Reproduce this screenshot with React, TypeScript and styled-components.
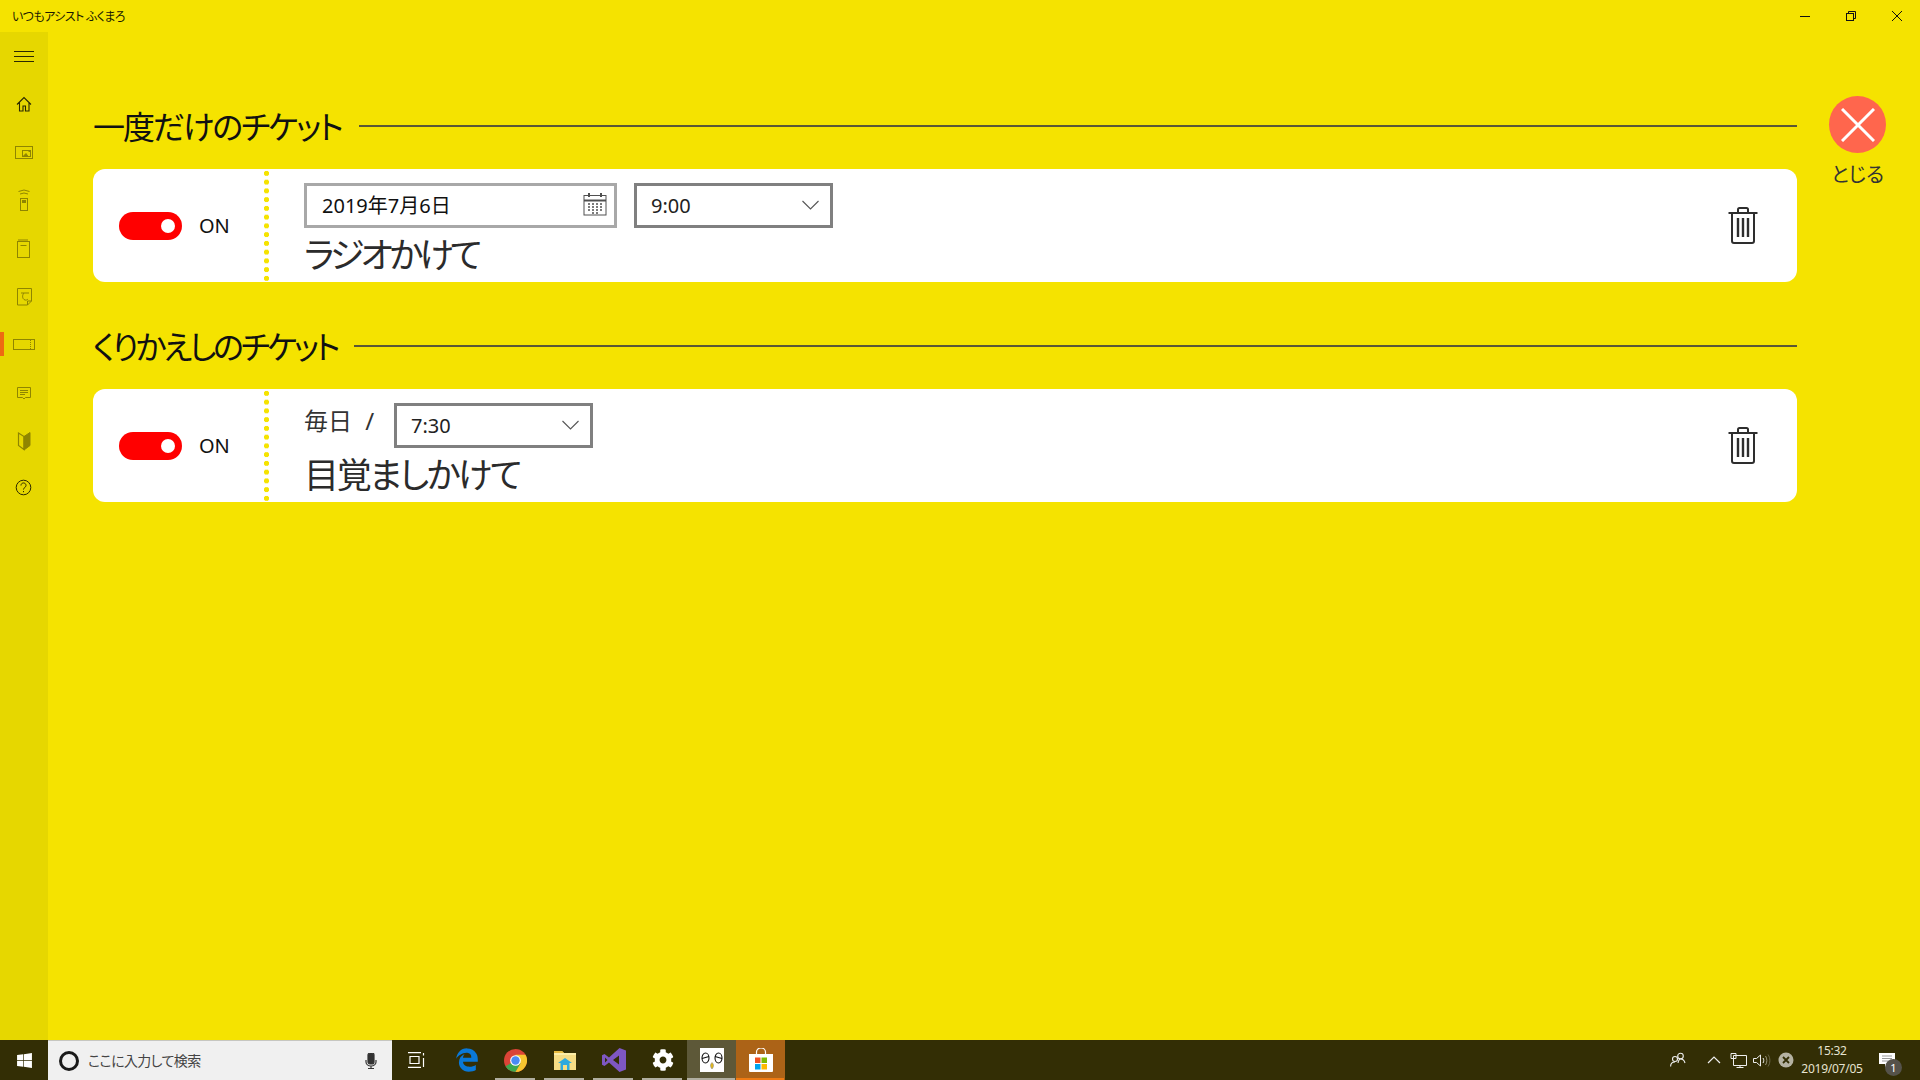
import { ReactNode } from "react";
import styled, { createGlobalStyle } from "styled-components";
import { FaCog, FaEdgeLegacy, FaWindows } from "react-icons/fa";

const GlobalStyle = createGlobalStyle`
  html, body {
    margin: 0;
    padding: 0;
    width: 1920px;
    height: 1080px;
    overflow: hidden;
    font-family: "Noto Sans", "Noto Sans CJK JP", sans-serif;
  }
  * {
    box-sizing: border-box;
  }
`;

const Page = styled.div`
  display: flex;
  flex-direction: column;
  width: 1920px;
  height: 1080px;
  background: #f5e300;
`;

const TitleBar = styled.div`
  display: flex;
  align-items: center;
  justify-content: space-between;
  height: 32px;
  padding-left: 12px;
`;

const AppName = styled.span`
  font-size: 12px;
  letter-spacing: -0.6px;
  color: #1a1a00;
  font-feature-settings: "palt";
`;

const WindowControls = styled.div`
  display: flex;
`;

const WindowButton = styled.div`
  display: flex;
  align-items: center;
  justify-content: center;
  width: 46px;
  height: 32px;
`;

const Body = styled.div`
  display: flex;
  flex: 1;
  min-height: 0;
`;

const Sidebar = styled.nav`
  display: flex;
  flex-direction: column;
  width: 48px;
  background: #e6d700;
`;

const NavItem = styled.div<{ $active?: boolean }>`
  position: relative;
  width: 48px;
  height: 48px;
  flex-shrink: 0;

  &::before {
    content: "";
    display: ${(p) => (p.$active ? "block" : "none")};
    position: absolute;
    left: 0;
    top: 12px;
    width: 4px;
    height: 24px;
    background: #ee6a12;
  }

  svg {
    display: block;
  }
`;

const Content = styled.main`
  display: flex;
  align-items: flex-start;
  flex: 1;
  padding: 64px 0 0 45px;
`;

const Sections = styled.div`
  display: flex;
  flex-direction: column;
  width: 1704px;
  padding-top: 5px;
`;

const SectionHeading = styled.div<{ $spaced?: boolean }>`
  display: flex;
  align-items: center;
  height: 50px;
  margin-top: ${(p) => (p.$spaced ? "39px" : "0")};
  margin-bottom: 18px;
`;

const HeadingText = styled.h2<{ $tracking: number }>`
  margin: 0;
  padding-top: 2px;
  font-size: 32px;
  font-weight: 400;
  line-height: 50px;
  letter-spacing: ${(p) => p.$tracking}px;
  color: #111;
  white-space: nowrap;
  font-feature-settings: "palt";
`;

const HeadingRule = styled.div`
  flex: 1;
  height: 2px;
  margin-left: 17px;
  background: #5a5636;
`;

const Card = styled.section`
  display: flex;
  align-items: stretch;
  height: 113px;
  border-radius: 12px;
  background: #fff;
`;

const ToggleArea = styled.div`
  display: flex;
  align-items: center;
  gap: 17px;
  width: 171px;
  padding-left: 26px;
`;

const Toggle = styled.div`
  display: flex;
  align-items: center;
  justify-content: flex-end;
  width: 63px;
  height: 28px;
  padding-right: 7px;
  border-radius: 14px;
  background: #ff0000;
`;

const ToggleKnob = styled.div`
  width: 14px;
  height: 14px;
  border-radius: 50%;
  background: #fff;
`;

const ToggleLabel = styled.span`
  font-size: 20px;
  color: #111;
`;

const Perforation = styled.div`
  width: 5px;
  background: radial-gradient(circle at center, #f5e300 2.4px, transparent 2.9px) 0 0 / 5px 8.75px repeat-y;
`;

const TicketBody = styled.div`
  display: flex;
  flex: 1;
  flex-direction: column;
  padding: 14px 0 0 35px;
`;

const FieldRow = styled.div`
  display: flex;
  align-items: center;
  height: 45px;
`;

const DateField = styled.div`
  display: flex;
  align-items: center;
  justify-content: space-between;
  width: 313px;
  height: 45px;
  margin-right: 17px;
  padding: 0 7px 2px 15px;
  border: 3px solid #a8a8a8;
  font-size: 20px;
  color: #111;
`;

const SelectField = styled.div`
  display: flex;
  align-items: center;
  justify-content: space-between;
  width: 199px;
  height: 45px;
  padding: 0 11px 1px 14px;
  border: 3px solid #808080;
  font-size: 20px;
  color: #222;
`;

const RepeatLabel = styled.span`
  width: 90px;
  margin-top: -12px;
  font-size: 24px;
  word-spacing: 7px;
  color: #333;
`;

const TicketTitle = styled.div<{ $tracking: number }>`
  margin-top: 2px;
  font-size: 35px;
  line-height: 50px;
  letter-spacing: ${(p) => p.$tracking}px;
  color: #2b2b2b;
  font-feature-settings: "palt";
`;

const TrashButton = styled.div`
  display: flex;
  align-items: center;
  justify-content: center;
  width: 30px;
  margin-right: 39px;
`;

const CloseColumn = styled.div`
  display: flex;
  flex-direction: column;
  align-items: center;
  width: 57px;
  margin-left: 32px;
`;

const CloseCircle = styled.div`
  display: flex;
  align-items: center;
  justify-content: center;
  width: 57px;
  height: 57px;
  border-radius: 50%;
  background: #ff664d;
`;

const CloseLabel = styled.span`
  margin-top: 7px;
  font-size: 20px;
  line-height: 30px;
  color: #333;
  white-space: nowrap;
  font-feature-settings: "palt";
`;

const Taskbar = styled.footer`
  display: flex;
  align-items: stretch;
  height: 40px;
  background: #332e05;
`;

const StartButton = styled.div`
  display: flex;
  align-items: center;
  justify-content: center;
  width: 48px;
  color: #fff;
  font-size: 17px;
`;

const SearchBox = styled.div`
  display: flex;
  align-items: center;
  width: 344px;
  padding: 0 15px 0 11px;
  border-top: 1px solid #c6c6c0;
  background: #f0f0f0;
`;

const SearchPrompt = styled.span`
  flex: 1;
  margin: -2px 0 0 9px;
  font-size: 14px;
  letter-spacing: -0.6px;
  color: #444;
  font-feature-settings: "palt";
`;

const TaskView = styled.div`
  display: flex;
  align-items: center;
  justify-content: center;
  width: 50px;
  padding-right: 1px;
`;

const TaskButton = styled.div<{ $bg?: string; $line?: string; $wide?: boolean; $color?: string; $size?: number }>`
  position: relative;
  display: flex;
  align-items: center;
  justify-content: center;
  width: 49px;
  color: ${(p) => p.$color ?? "#fff"};
  font-size: ${(p) => p.$size ?? 22}px;
  background: ${(p) => p.$bg ?? "transparent"};

  &::after {
    content: "";
    position: absolute;
    bottom: 0;
    left: ${(p) => (p.$wide ? "0" : "4px")};
    right: ${(p) => (p.$wide ? "1px" : "5px")};
    height: 2px;
    background: ${(p) => p.$line ?? "transparent"};
  }
`;

const Tray = styled.div`
  display: flex;
  align-items: center;
  margin-left: auto;
  padding-right: 13px;
`;

const TrayIcon = styled.div<{ $gap?: number }>`
  display: flex;
  align-items: center;
  justify-content: center;
  width: 24px;
  height: 40px;
  margin-right: ${(p) => p.$gap ?? 0}px;
`;

const Clock = styled.div`
  display: flex;
  flex-direction: column;
  align-items: center;
  width: 68px;
  font-size: 12px;
  line-height: 18px;
  letter-spacing: -0.25px;
  color: #e6e3d0;
`;

const NotifyButton = styled.div`
  position: relative;
  display: flex;
  align-items: center;
  justify-content: center;
  width: 40px;
  height: 40px;
  margin-left: 1px;
`;

const NotifyBadge = styled.span`
  position: absolute;
  right: 5px;
  bottom: 4px;
  width: 17px;
  height: 17px;
  border-radius: 50%;
  background: #55524a;
  color: #fff;
  font-size: 11px;
  line-height: 17px;
  text-align: center;
`;

function NavIcon({ children }: { children: ReactNode }) {
  return (
    <svg width="48" height="48" viewBox="0 0 48 48" fill="none" stroke="#8f8500" strokeWidth="1">
      {children}
    </svg>
  );
}

const navIcons: { key: string; active?: boolean; icon: ReactNode }[] = [
  {
    key: "menu",
    icon: <path d="M14 19.5h20M14 24.5h20M14 29.5h20" stroke="#2b2800" />,
  },
  {
    key: "home",
    icon: <path d="M17 24.5 24 17.5l7 7M19.5 22.5v8.5h3.5v-5h2.5v5H29v-8.5" stroke="#2b2800" strokeWidth="1.1" />,
  },
  {
    key: "picture",
    icon: (
      <>
        <rect x="15.5" y="18.5" width="17" height="12" />
        <rect x="22.5" y="22.5" width="8" height="6" />
        <path d="M23 28.5l3-3 2 3z" fill="#8f8500" />
        <path d="M28.5 23.5h2" />
      </>
    ),
  },
  {
    key: "remote",
    icon: (
      <>
        <rect x="20.5" y="22.5" width="7" height="12" />
        <rect x="22" y="24" width="4" height="3" fill="#8f8500" stroke="none" />
        <path d="M18.5 15.5q5.5-3 11 0M20 18q4-2 8 0" />
      </>
    ),
  },
  {
    key: "note",
    icon: (
      <>
        <rect x="17.5" y="17.5" width="12" height="16" />
        <path d="M19 15v2.5M21 15v2.5M23 15v2.5M25 15v2.5M27 15v2.5M20.5 21.5h6" />
      </>
    ),
  },
  {
    key: "tnote",
    icon: (
      <>
        <path d="M17.5 16.5h14v12.5l-4 4h-10zM31.5 29h-4v4" />
        <path d="M21 21h8M24 21c-2 2-2 6 1 7 1 .3 2 0 3-1" />
      </>
    ),
  },
  {
    key: "ticket",
    active: true,
    icon: (
      <>
        <rect x="13.5" y="19.5" width="21" height="10" />
        <path d="M30.5 20v10" strokeDasharray="1 1" />
      </>
    ),
  },
  {
    key: "chat",
    icon: (
      <>
        <path d="M17.5 19.5h13v10h-5l-1.500 1.500-1.500-1.500h-5z" />
        <path d="M20 22.500h8M20 24.500h8M20 26.500h5" />
      </>
    ),
  },
  {
    key: "beginner",
    icon: (
      <>
        <path d="M18.500 17l5.500 3.500v13l-5.500-4z" strokeWidth="1.200" />
        <path d="M24 20.500 30 16.500v13l-6 4.500z" fill="#8f8500" />
      </>
    ),
  },
  {
    key: "help",
    icon: (
      <>
        <circle cx="23.500" cy="23.500" r="7.300" stroke="#2b2800" />
        <path d="M21 21.500c0-3.400 5-3.400 5 0 0 2-2.500 2-2.500 4" stroke="#2b2800" />
        <path d="M23.500 27v1.200" stroke="#2b2800" />
      </>
    ),
  },
];

function CalendarIcon() {
  return (
    <svg width="24" height="23" viewBox="0 0 24 23" fill="none" stroke="#505050">
      <rect x="1" y="2.500" width="22" height="19.500" />
      <path d="M1 7.500h22" strokeWidth="2" />
      <path d="M6 0v4M18 0v4" strokeWidth="2" />
      <path
        d="M5 11h2M9 11h2M13 11h2M17 11h2M5 14h2M9 14h2M13 14h2M17 14h2M5 17h2M9 17h2M13 17h2M17 17h2M9 20h2M13 20h2"
        strokeWidth="1.500"
      />
    </svg>
  );
}

function ChevronIcon() {
  return (
    <svg width="17" height="10" viewBox="0 0 17 10" fill="none" stroke="#555" strokeWidth="1.100">
      <path d="M.5 1 8.500 9 16.500 1" />
    </svg>
  );
}

function TrashIcon() {
  return (
    <svg width="30" height="37" viewBox="0 0 30 37" fill="none" stroke="#2e2e2e" strokeLinejoin="round">
      <path d="M.5 6h29" strokeWidth="2" />
      <path d="M10 6V2.500a1.500 1.500 0 0 1 1.500-1.500h7a1.500 1.500 0 0 1 1.500 1.500V6" strokeWidth="2" />
      <path d="M4 6v28a2 2 0 0 0 2 2h18a2 2 0 0 0 2-2V6" strokeWidth="2" />
      <path d="M10 11v19M15 11v19M20 11v19" strokeWidth="2.400" />
    </svg>
  );
}

function ChromeIcon() {
  return (
    <svg width="23" height="23" viewBox="0 0 24 24">
      <circle cx="12" cy="12" r="12" fill="#db4437" />
      <path d="M12 12 1.600 18A12 12 0 0 0 12 24l6-10z" fill="#3da84f" />
      <path d="M12 6h10.400A12 12 0 0 1 12 24l5.200-9z" fill="#f7c62f" />
      <circle cx="12" cy="12" r="5.600" fill="#fff" />
      <circle cx="12" cy="12" r="4.400" fill="#4a8af4" />
    </svg>
  );
}

function ExplorerIcon() {
  return (
    <svg width="22" height="20" viewBox="0 0 22 20">
      <path d="M0 1h8l2 2h12v17H0z" fill="#f6dd85" />
      <path d="M0 1h8l2 2H0z" fill="#e8bb40" />
      <path d="M0 3h22v2H0z" fill="#fdeea8" />
      <path d="M11 8l7 5h-2.500v7H6.500v-7H4z" fill="#2ea9df" />
      <path d="M9 15h4v5H9z" fill="#f6dd85" />
    </svg>
  );
}

function VisualStudioIcon() {
  return (
    <svg width="24" height="24" viewBox="0 0 24 24">
      <path d="M17.500 0 24 2.500v19L17.500 24 7 14.500 2.500 18 0 16.800V7.200L2.500 6 7 9.500z" fill="#7e57c2" />
      <path d="M3 9.500v5L5.500 12zM11 12l6 4.500v-9z" fill="#332e05" />
    </svg>
  );
}

function OwlIcon() {
  return (
    <svg width="24" height="24" viewBox="0 0 24 24">
      <rect width="24" height="24" fill="#fff" />
      <ellipse cx="5.500" cy="10" rx="3.500" ry="5" fill="#fff" stroke="#111" strokeWidth="1.100" />
      <ellipse cx="18.500" cy="10" rx="3.500" ry="5" fill="#fff" stroke="#111" strokeWidth="1.100" />
      <path d="M2 10.500 9 8.500M15 8.500l7 2" stroke="#111" strokeWidth="1.300" />
      <path d="M12 14.500c2 2 2 4 0 6.500-2-2.500-2-4.500 0-6.500z" fill="#e0b820" stroke="#777" strokeWidth=".5" />
    </svg>
  );
}

function StoreIcon() {
  return (
    <svg width="24" height="24" viewBox="0 0 24 24">
      <path d="M0 6h24v17a1 1 0 0 1-1 1H1a1 1 0 0 1-1-1z" fill="#fff" />
      <path d="M7.500 7V4a4.500 4 0 0 1 9 0v3" fill="none" stroke="#fff" strokeWidth="1.200" />
      <rect x="6" y="9.500" width="5.500" height="5.500" fill="#f25022" />
      <rect x="12.500" y="9.500" width="5.500" height="5.500" fill="#7fba00" />
      <rect x="6" y="16" width="5.500" height="5.500" fill="#00a4ef" />
      <rect x="12.500" y="16" width="5.500" height="5.500" fill="#ffb900" />
    </svg>
  );
}

function TicketCard({ fields, title, tracking }: { fields: ReactNode; title: string; tracking: number }) {
  return (
    <Card>
      <ToggleArea>
        <Toggle>
          <ToggleKnob />
        </Toggle>
        <ToggleLabel>ON</ToggleLabel>
      </ToggleArea>
      <Perforation />
      <TicketBody>
        <FieldRow>{fields}</FieldRow>
        <TicketTitle $tracking={tracking}>{title}</TicketTitle>
      </TicketBody>
      <TrashButton>
        <TrashIcon />
      </TrashButton>
    </Card>
  );
}

export default function App() {
  return (
    <Page>
      <GlobalStyle />
      <TitleBar>
        <AppName>いつもアシスト ふくまろ</AppName>
        <WindowControls>
          <WindowButton>
            <svg width="10" height="10" stroke="#111" fill="none">
              <path d="M0 5.500h10" />
            </svg>
          </WindowButton>
          <WindowButton>
            <svg width="10" height="10" stroke="#111" fill="none">
              <rect x=".5" y="2.500" width="7" height="7" />
              <path d="M2.500 2.500v-2h7v7h-2" />
            </svg>
          </WindowButton>
          <WindowButton>
            <svg width="10" height="10" stroke="#111" fill="none">
              <path d="M0 0l10 10M10 0 0 10" />
            </svg>
          </WindowButton>
        </WindowControls>
      </TitleBar>

      <Body>
        <Sidebar>
          {navIcons.map((item) => (
            <NavItem key={item.key} $active={item.active}>
              <NavIcon>{item.icon}</NavIcon>
            </NavItem>
          ))}
        </Sidebar>

        <Content>
          <Sections>
            <SectionHeading>
              <HeadingText $tracking={-2.1}>一度だけのチケット</HeadingText>
              <HeadingRule />
            </SectionHeading>
            <TicketCard
              title="ラジオかけて"
              tracking={-3.6}
              fields={
                <>
                  <DateField>
                    2019年7月6日
                    <CalendarIcon />
                  </DateField>
                  <SelectField>
                    9:00
                    <ChevronIcon />
                  </SelectField>
                </>
              }
            />

            <SectionHeading $spaced>
              <HeadingText $tracking={-3.1}>くりかえしのチケット</HeadingText>
              <HeadingRule />
            </SectionHeading>
            <TicketCard
              title="目覚ましかけて"
              tracking={-2.3}
              fields={
                <>
                  <RepeatLabel>毎日 /</RepeatLabel>
                  <SelectField>
                    7:30
                    <ChevronIcon />
                  </SelectField>
                </>
              }
            />
          </Sections>

          <CloseColumn>
            <CloseCircle>
              <svg width="34" height="34" stroke="#fff" strokeWidth="3">
                <path d="M1 1l32 32M33 1 1 33" />
              </svg>
            </CloseCircle>
            <CloseLabel>とじる</CloseLabel>
          </CloseColumn>
        </Content>
      </Body>

      <Taskbar>
        <StartButton>
          <FaWindows />
        </StartButton>
        <SearchBox>
          <svg width="20" height="20" fill="none" stroke="#1a1a1a" strokeWidth="3">
            <circle cx="10" cy="10" r="8.500" />
          </svg>
          <SearchPrompt>ここに入力して検索</SearchPrompt>
          <svg width="12" height="16" fill="none" stroke="#333" strokeWidth="1.200">
            <rect x="3" y="0" width="6" height="11" rx="2" fill="#333" />
            <path d="M1 7v2a5 4 0 0 0 10 0V7M6 13v3M3 15.500h6" />
          </svg>
        </SearchBox>
        <TaskView>
          <svg width="18" height="16" fill="none" stroke="#fff" strokeWidth="1.200">
            <path d="M0 .6h13M0 15.400h13M2 4.500h9v7H2zM15.500 1v2.500M15.500 6v9" />
          </svg>
        </TaskView>
        <TaskButton $color="#0a78d7" $size={24}>
          <FaEdgeLegacy />
        </TaskButton>
        <TaskButton $line="#b0aea0">
          <ChromeIcon />
        </TaskButton>
        <TaskButton $line="#b0aea0">
          <ExplorerIcon />
        </TaskButton>
        <TaskButton $line="#b0aea0">
          <VisualStudioIcon />
        </TaskButton>
        <TaskButton $line="#b0aea0">
          <FaCog />
        </TaskButton>
        <TaskButton $bg="#5d5838" $line="#b0aea0" $wide>
          <OwlIcon />
        </TaskButton>
        <TaskButton $bg="#ac6317" $line="#ee7a12" $wide>
          <StoreIcon />
        </TaskButton>

        <Tray>
          <TrayIcon $gap={12}>
            <svg width="16" height="16" fill="none" stroke="#eee" strokeWidth="1.100">
              <circle cx="10.500" cy="4" r="2.800" />
              <circle cx="5" cy="7" r="2.500" />
              <path d="M.6 14.500c0-3 1.500-4.500 4.400-4.500M8 11c.5-2.500 1.700-4 2.500-4 2.500 0 4 2 4.500 4" />
            </svg>
          </TrayIcon>
          <TrayIcon>
            <svg width="14" height="8" fill="none" stroke="#eee" strokeWidth="1.200">
              <path d="M1 7l6-6 6 6" />
            </svg>
          </TrayIcon>
          <TrayIcon>
            <svg width="17" height="15" fill="none" stroke="#eee">
              <path d="M3.500 2.500h13v10h-13zM1 .5h5v5H1zM10 12.500v2M6.500 14.500h7" />
            </svg>
          </TrayIcon>
          <TrayIcon>
            <svg width="18" height="15" fill="none" stroke="#eee">
              <path d="M.5 5.500h3l4-3.500v11l-4-3.500h-3z" />
              <path d="M10 5c1 1.500 1 3.500 0 5" />
              <path d="M12.500 3c1.800 2.500 1.800 6.500 0 9" stroke="#99957c" />
              <path d="M15 1.500c2.500 3.500 2.500 8.500 0 12" stroke="#6b674a" />
            </svg>
          </TrayIcon>
          <TrayIcon>
            <svg width="16" height="16">
              <circle cx="8" cy="8" r="7.500" fill="#b5b2a2" />
              <path d="M5 5l6 6M11 5l-6 6" stroke="#332e05" strokeWidth="1.800" />
            </svg>
          </TrayIcon>
          <Clock>
            <span>15:32</span>
            <span>2019/07/05</span>
          </Clock>
          <NotifyButton>
            <svg width="16" height="15">
              <path d="M0 0h16v11H9l-3 3.500V11H0z" fill="#fff" />
              <path d="M3 3h10M3 5.500h10M3 8h7" stroke="#999" />
            </svg>
            <NotifyBadge>1</NotifyBadge>
          </NotifyButton>
        </Tray>
      </Taskbar>
    </Page>
  );
}
